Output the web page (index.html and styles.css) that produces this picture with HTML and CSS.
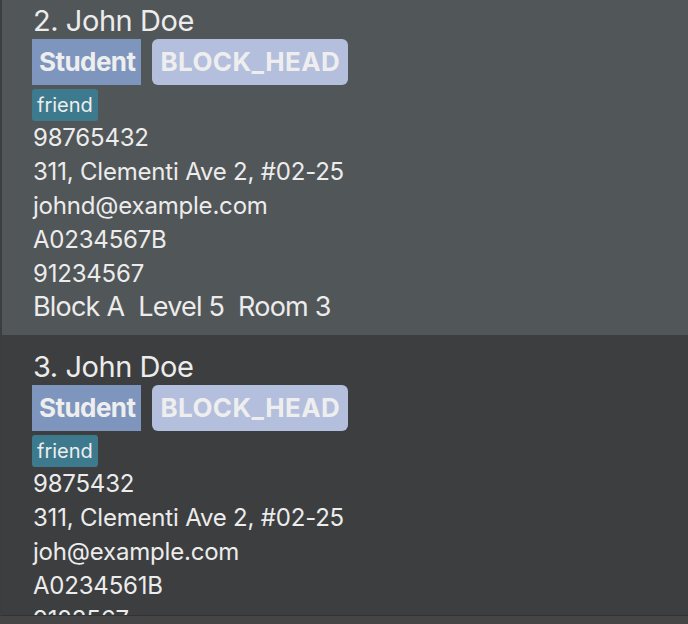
FILE: index.html
```html
<!DOCTYPE html>
<html>
<head>
<meta charset="utf-8">
<link rel="stylesheet" href="styles.css">
</head>
<body>
<div class="viewport">
  <div class="list">
    <div class="cell cell-odd">
      <div class="name">2. John Doe</div>
      <div class="roles">
        <span class="role role-student">Student</span>
        <span class="role role-head">BLOCK_HEAD</span>
      </div>
      <div class="tags"><span class="tag">friend</span></div>
      <div class="line">98765432</div>
      <div class="line">311, Clementi Ave 2, #02-25</div>
      <div class="line">johnd@example.com</div>
      <div class="line">A0234567B</div>
      <div class="line">91234567</div>
      <div class="room"><span>Block A</span><span>Level 5</span><span>Room 3</span></div>
    </div>
    <div class="cell cell-even">
      <div class="name">3. John Doe</div>
      <div class="roles">
        <span class="role role-student">Student</span>
        <span class="role role-head">BLOCK_HEAD</span>
      </div>
      <div class="tags"><span class="tag">friend</span></div>
      <div class="line">9875432</div>
      <div class="line">311, Clementi Ave 2, #02-25</div>
      <div class="line">joh@example.com</div>
      <div class="line">A0234561B</div>
      <div class="line">9123567</div>
      <div class="room"><span>Block A</span><span>Level 5</span><span>Room 3</span></div>
    </div>
  </div>
</div>
<div class="footer"></div>
</body>
</html>
```
FILE: styles.css
```css
html, body {
  margin: 0;
  padding: 0;
  background: #3c3e3f;
}
body {
  width: 688px;
  height: 624px;
  overflow: hidden;
  font-family: Inter, "Noto Sans", sans-serif;
  color: #ececec;
}
.viewport {
  height: 616px;
  overflow: hidden;
  border-left: 2px solid #3b3d3e;
  border-bottom: 1px solid #323334;
  box-sizing: border-box;
}
.list {
  margin-top: -11px;
}
.cell {
  padding: 14px 0 12px 30px;
}
.cell-odd {
  background: #515658;
}
.cell-even {
  background: #3c3e3f;
}
.name,
.line,
.room {
  padding-left: 1px;
}
.name {
  font-size: 29px;
  line-height: 36px;
  height: 36px;
  letter-spacing: -0.45px;
}
.roles {
  display: flex;
  gap: 11px;
  height: 46px;
}
.role {
  font-weight: 700;
  font-size: 26px;
  line-height: 46px;
  color: #eeeeee;
}
.role-student {
  background: #7e96be;
  padding: 0 6px 0 7px;
  letter-spacing: -0.55px;
}
.role-head {
  background: #b3bfdd;
  border-radius: 6px;
  padding: 0 8px;
  letter-spacing: 0.4px;
}
.tags {
  display: flex;
  margin-top: 4px;
  height: 32px;
}
.tag {
  background: #3e7a8d;
  border-radius: 3px;
  font-size: 20px;
  line-height: 32px;
  padding: 0 5px;
  color: #eeeeee;
}
.line {
  font-size: 24px;
  line-height: 34px;
  height: 34px;
  letter-spacing: -0.2px;
}
.room {
  display: flex;
  gap: 14px;
  font-size: 27px;
  line-height: 32px;
  height: 32px;
  letter-spacing: -0.8px;
}
.footer {
  height: 8px;
  background: #454546;
}
```
